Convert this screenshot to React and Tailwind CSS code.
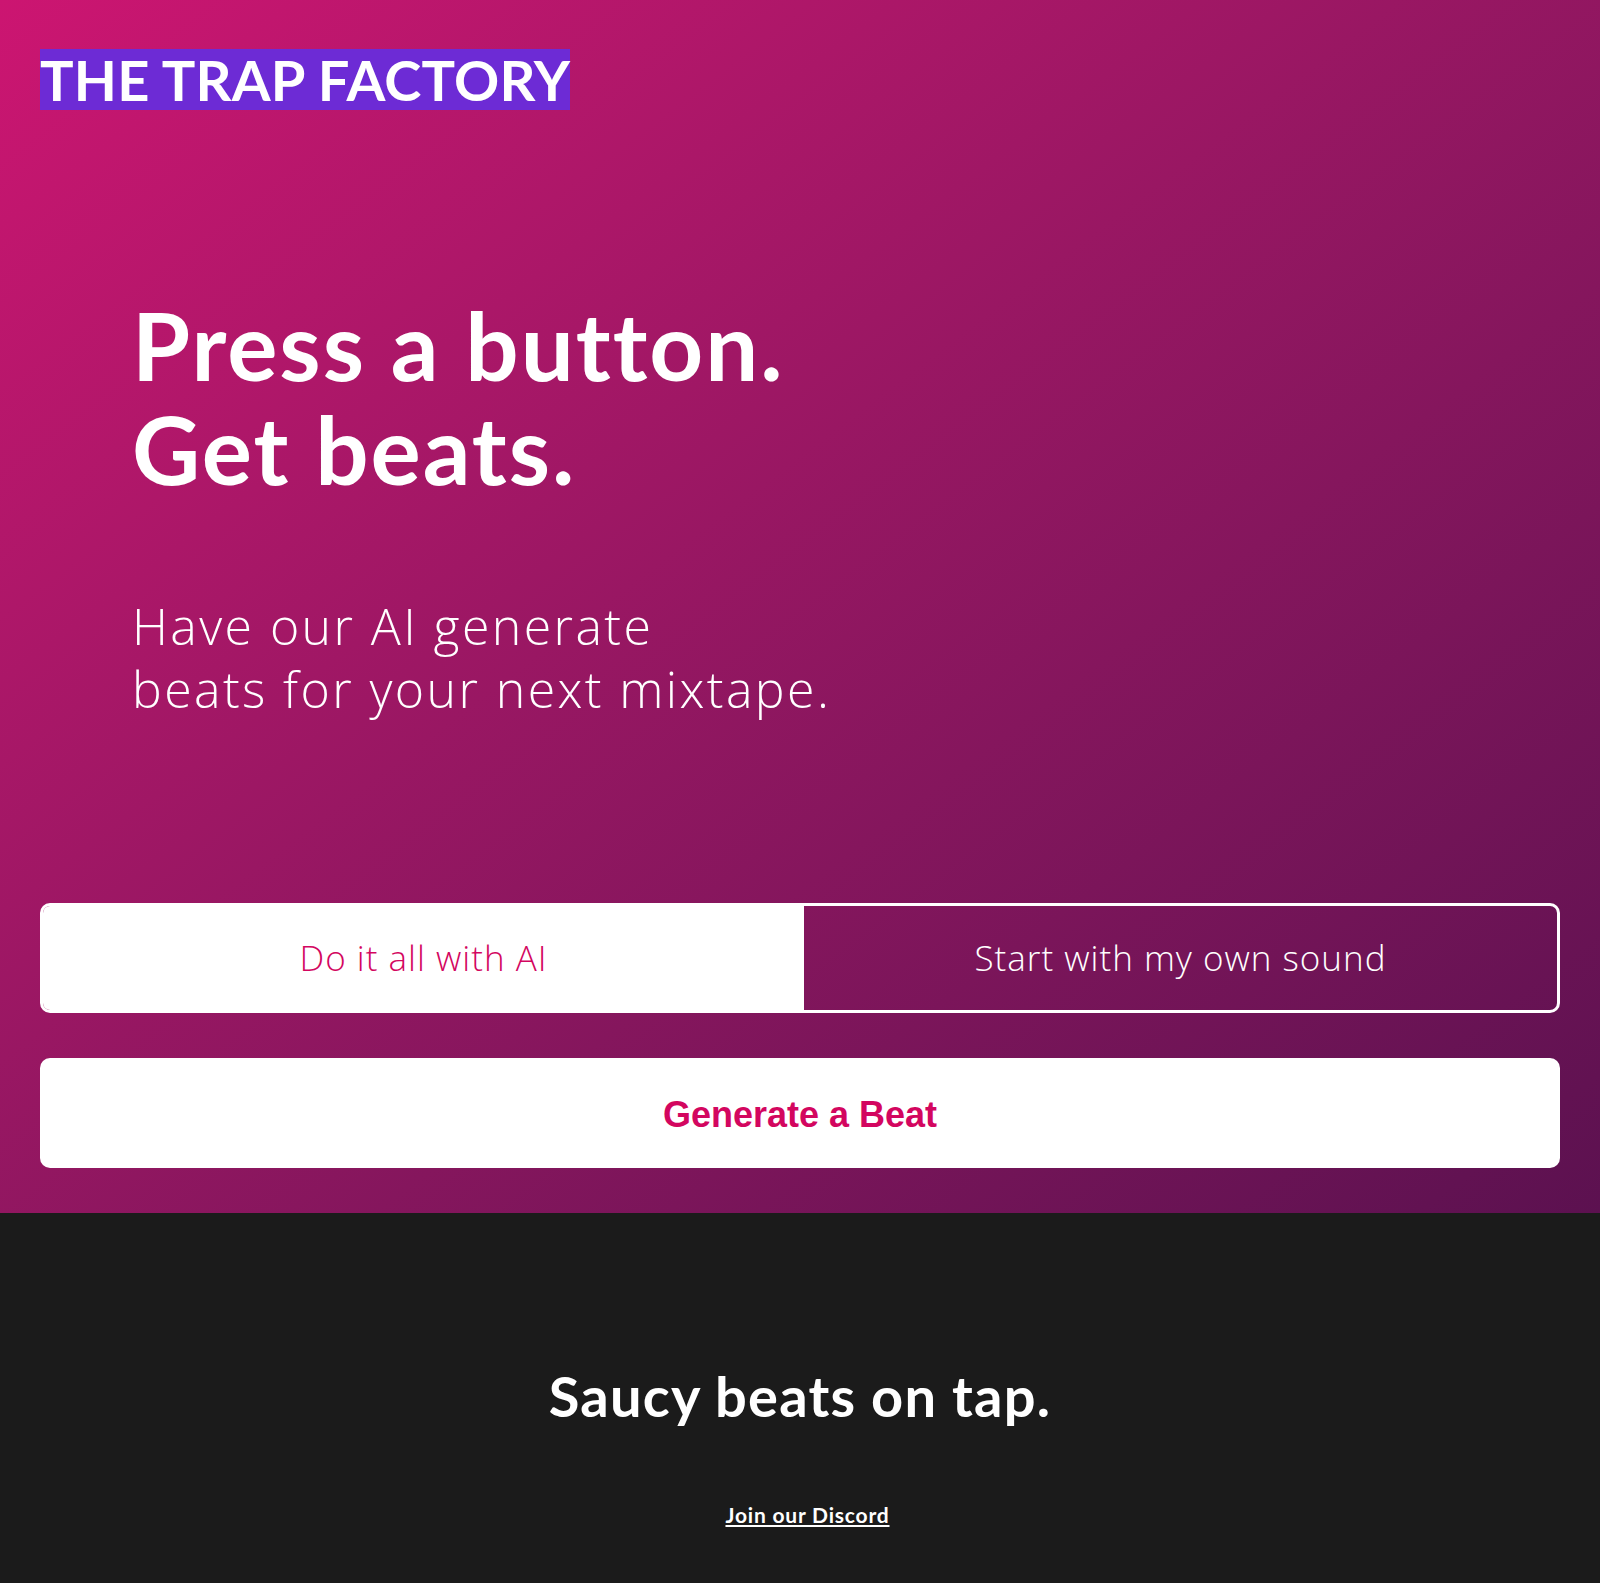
export default function App() {
  const ub = { fontFamily: 'Lato, "Open Sans", sans-serif' };
  const os = { fontFamily: '"Open Sans", Lato, sans-serif' };
  return (
    <div className="w-full min-h-[1583px] flex flex-col" style={ub}>
      <section className="h-[1213px] bg-linear-to-br from-[#cc1571] to-[#5c1150] px-10 pt-[49px] flex flex-col">
        <div className="flex">
          <span className="bg-[#6d2bd5] text-white font-bold text-[56px] leading-[61px] whitespace-nowrap tracking-[0.2px]">
            THE TRAP FACTORY
          </span>
        </div>
        <h1 className="mt-[183px] ml-[92px] text-white font-bold text-[94px] leading-[104px] tracking-[2px]">
          Press a button.
          <br />
          Get beats.
        </h1>
        <p
          className="mt-[94px] ml-[92px] text-white font-light text-[50px] leading-[63px] tracking-[2.4px]"
          style={os}
        >
          Have our AI generate
          <br />
          beats for your next mixtape.
        </p>
        <div className="mt-[182px] h-[110px] flex rounded-[10px] border-[3px] border-white overflow-hidden" style={os}>
          <button className="w-[761px] h-full bg-white text-[#d3065f] text-[35px] font-light tracking-[1px]">
            Do it all with AI
          </button>
          <button className="flex-1 h-full text-white text-[35px] font-light tracking-[1px]">
            Start with my own sound
          </button>
        </div>
        <button
          className="mt-[45px] h-[110px] w-full rounded-[10px] bg-white text-[#d3065f] text-[36px] font-bold pt-[4px]"
          style={{ fontFamily: '"Liberation Sans", Arial, sans-serif' }}
        >
          Generate a Beat
        </button>
      </section>
      <footer className="flex-1 bg-[#1b1b1b] flex flex-col items-center pt-[149px]">
        <h2 className="text-white font-bold text-[56px] leading-[67px] tracking-[1.2px]">Saucy beats on tap.</h2>
        <a href="#" className="mt-[72px] ml-[15px] text-white font-bold text-[21px] leading-[28px] underline tracking-[0.8px]">
          Join our Discord
        </a>
      </footer>
    </div>
  );
}
